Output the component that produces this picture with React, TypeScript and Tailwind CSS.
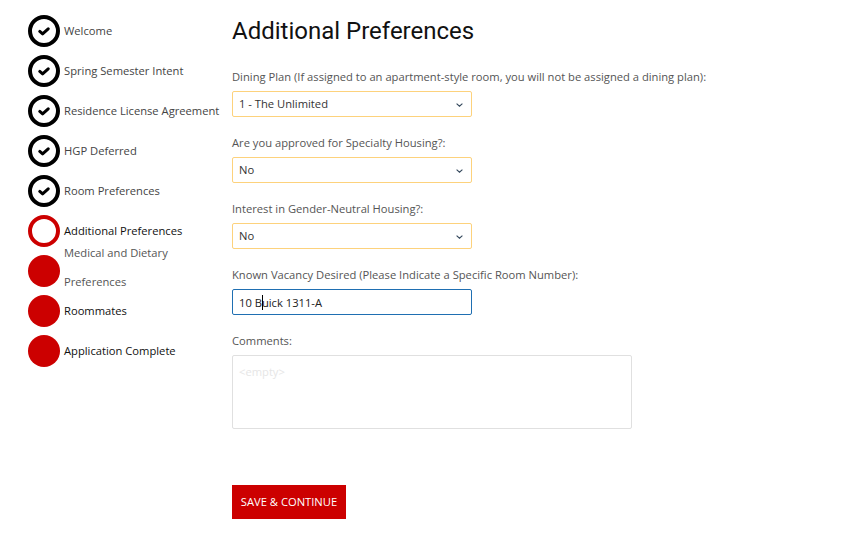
import React from "react";

const F = "[font-family:'Open_Sans',sans-serif]";

function Check() {
  return (
    <svg width="12" height="9" viewBox="0 0 12 9" fill="none">
      <path d="M1.8 4.4 L4.6 6.9 L10.2 1.8" stroke="#000" strokeWidth="3" strokeLinecap="round" strokeLinejoin="round" />
    </svg>
  );
}

function Chevron() {
  return (
    <svg width="7" height="4" viewBox="0 0 7 4" fill="none" className="absolute right-[9.5px] top-[11.5px]">
      <path d="M0.6 0.6 L3.5 3.2 L6.4 0.6" stroke="#33475b" strokeWidth="1.1" />
    </svg>
  );
}

const done = ["Welcome", "Spring Semester Intent", "Residence License Agreement", "HGP Deferred", "Room Preferences"];

function Field({ label, value }: { label: string; value: string }) {
  return (
    <div className="mb-[16px]">
      <div className="h-[24px] pt-[1px] text-[11.2px] leading-[18px] text-[#555]">{label}</div>
      <div className="relative w-[240px]">
        <select
          defaultValue={value}
          className="block h-[26px] w-full appearance-none rounded-[2px] border border-[#fdd27c] bg-white px-[6px] text-[11.2px] text-[#333] outline-none"
        >
          <option>{value}</option>
        </select>
        <Chevron />
      </div>
    </div>
  );
}

export default function App() {
  return (
    <div className={`flex h-[534px] w-[858px] bg-white ${F}`}>
      <aside className="w-[232px] shrink-0 pl-[28px] pt-[15px]">
        {done.map((s) => (
          <div key={s} className="flex h-[40px] items-start">
            <div className="flex h-[32px] w-[32px] shrink-0 items-center justify-center rounded-full border-[4px] border-black">
              <Check />
            </div>
            <span className="ml-[4px] mt-[7px] whitespace-nowrap text-[11.2px] leading-[18px] text-[#444]">{s}</span>
          </div>
        ))}
        <div className="flex h-[40px] items-start">
          <div className="h-[32px] w-[32px] shrink-0 rounded-full border-[4px] border-[#cc0000]" />
          <span className="ml-[4px] mt-[7px] whitespace-nowrap text-[11.2px] leading-[18px] text-[#111]">Additional Preferences</span>
        </div>
        <div className="flex h-[40px] items-start">
          <div className="h-[32px] w-[32px] shrink-0 rounded-full bg-[#cc0000]" />
          <span className="ml-[4px] mt-[-17px] w-[120px] text-[11.2px] leading-[29px] text-[#555]">Medical and Dietary Preferences</span>
        </div>
        <div className="flex h-[40px] items-start">
          <div className="h-[32px] w-[32px] shrink-0 rounded-full bg-[#cc0000]" />
          <span className="ml-[4px] mt-[7px] whitespace-nowrap text-[11.2px] leading-[18px] text-[#111]">Roommates</span>
        </div>
        <div className="flex h-[40px] items-start">
          <div className="h-[32px] w-[32px] shrink-0 rounded-full bg-[#cc0000]" />
          <span className="ml-[4px] mt-[7px] whitespace-nowrap text-[11.2px] leading-[18px] text-[#111]">Application Complete</span>
        </div>
      </aside>
      <main className="flex-1">
        <h1 className="h-[67px] pt-[16px] font-['Roboto',sans-serif] text-[24px] font-normal leading-[30px] text-[#111]">
          Additional Preferences
        </h1>
        <Field label="Dining Plan (If assigned to an apartment-style room, you will not be assigned a dining plan):" value="1 - The Unlimited" />
        <Field label="Are you approved for Specialty Housing?:" value="No" />
        <Field label="Interest in Gender-Neutral Housing?:" value="No" />
        <div className="mb-[16px]">
          <div className="h-[24px] pt-[1px] text-[11.2px] leading-[18px] text-[#555]">Known Vacancy Desired (Please Indicate a Specific Room Number):</div>
          <div className="relative w-[240px]">
            <input
              readOnly
              value="10 Buick 1311-A"
              className="block h-[26px] w-full rounded-[2px] border border-[#1f6fb2] bg-white px-[6px] text-[11.2px] text-[#222] outline-none"
            />
            <div className="absolute left-[30px] top-[6px] h-[15px] w-[1px] bg-black" />
          </div>
        </div>
        <div>
          <div className="h-[24px] pt-[1px] text-[11.2px] leading-[18px] text-[#555]">Comments:</div>
          <textarea
            readOnly
            placeholder="<empty>"
            className="block h-[74px] w-[400px] resize-none rounded-[2px] border border-[#e0e0e0] bg-white px-[6px] py-[8px] text-[11.2px] leading-[16px] outline-none placeholder:text-[#e6e6e6]"
          />
        </div>
        <button className="mt-[56px] block h-[34px] w-[114px] bg-[#cc0000] text-center text-[11.2px] text-white">
          SAVE &amp; CONTINUE
        </button>
      </main>
    </div>
  );
}
